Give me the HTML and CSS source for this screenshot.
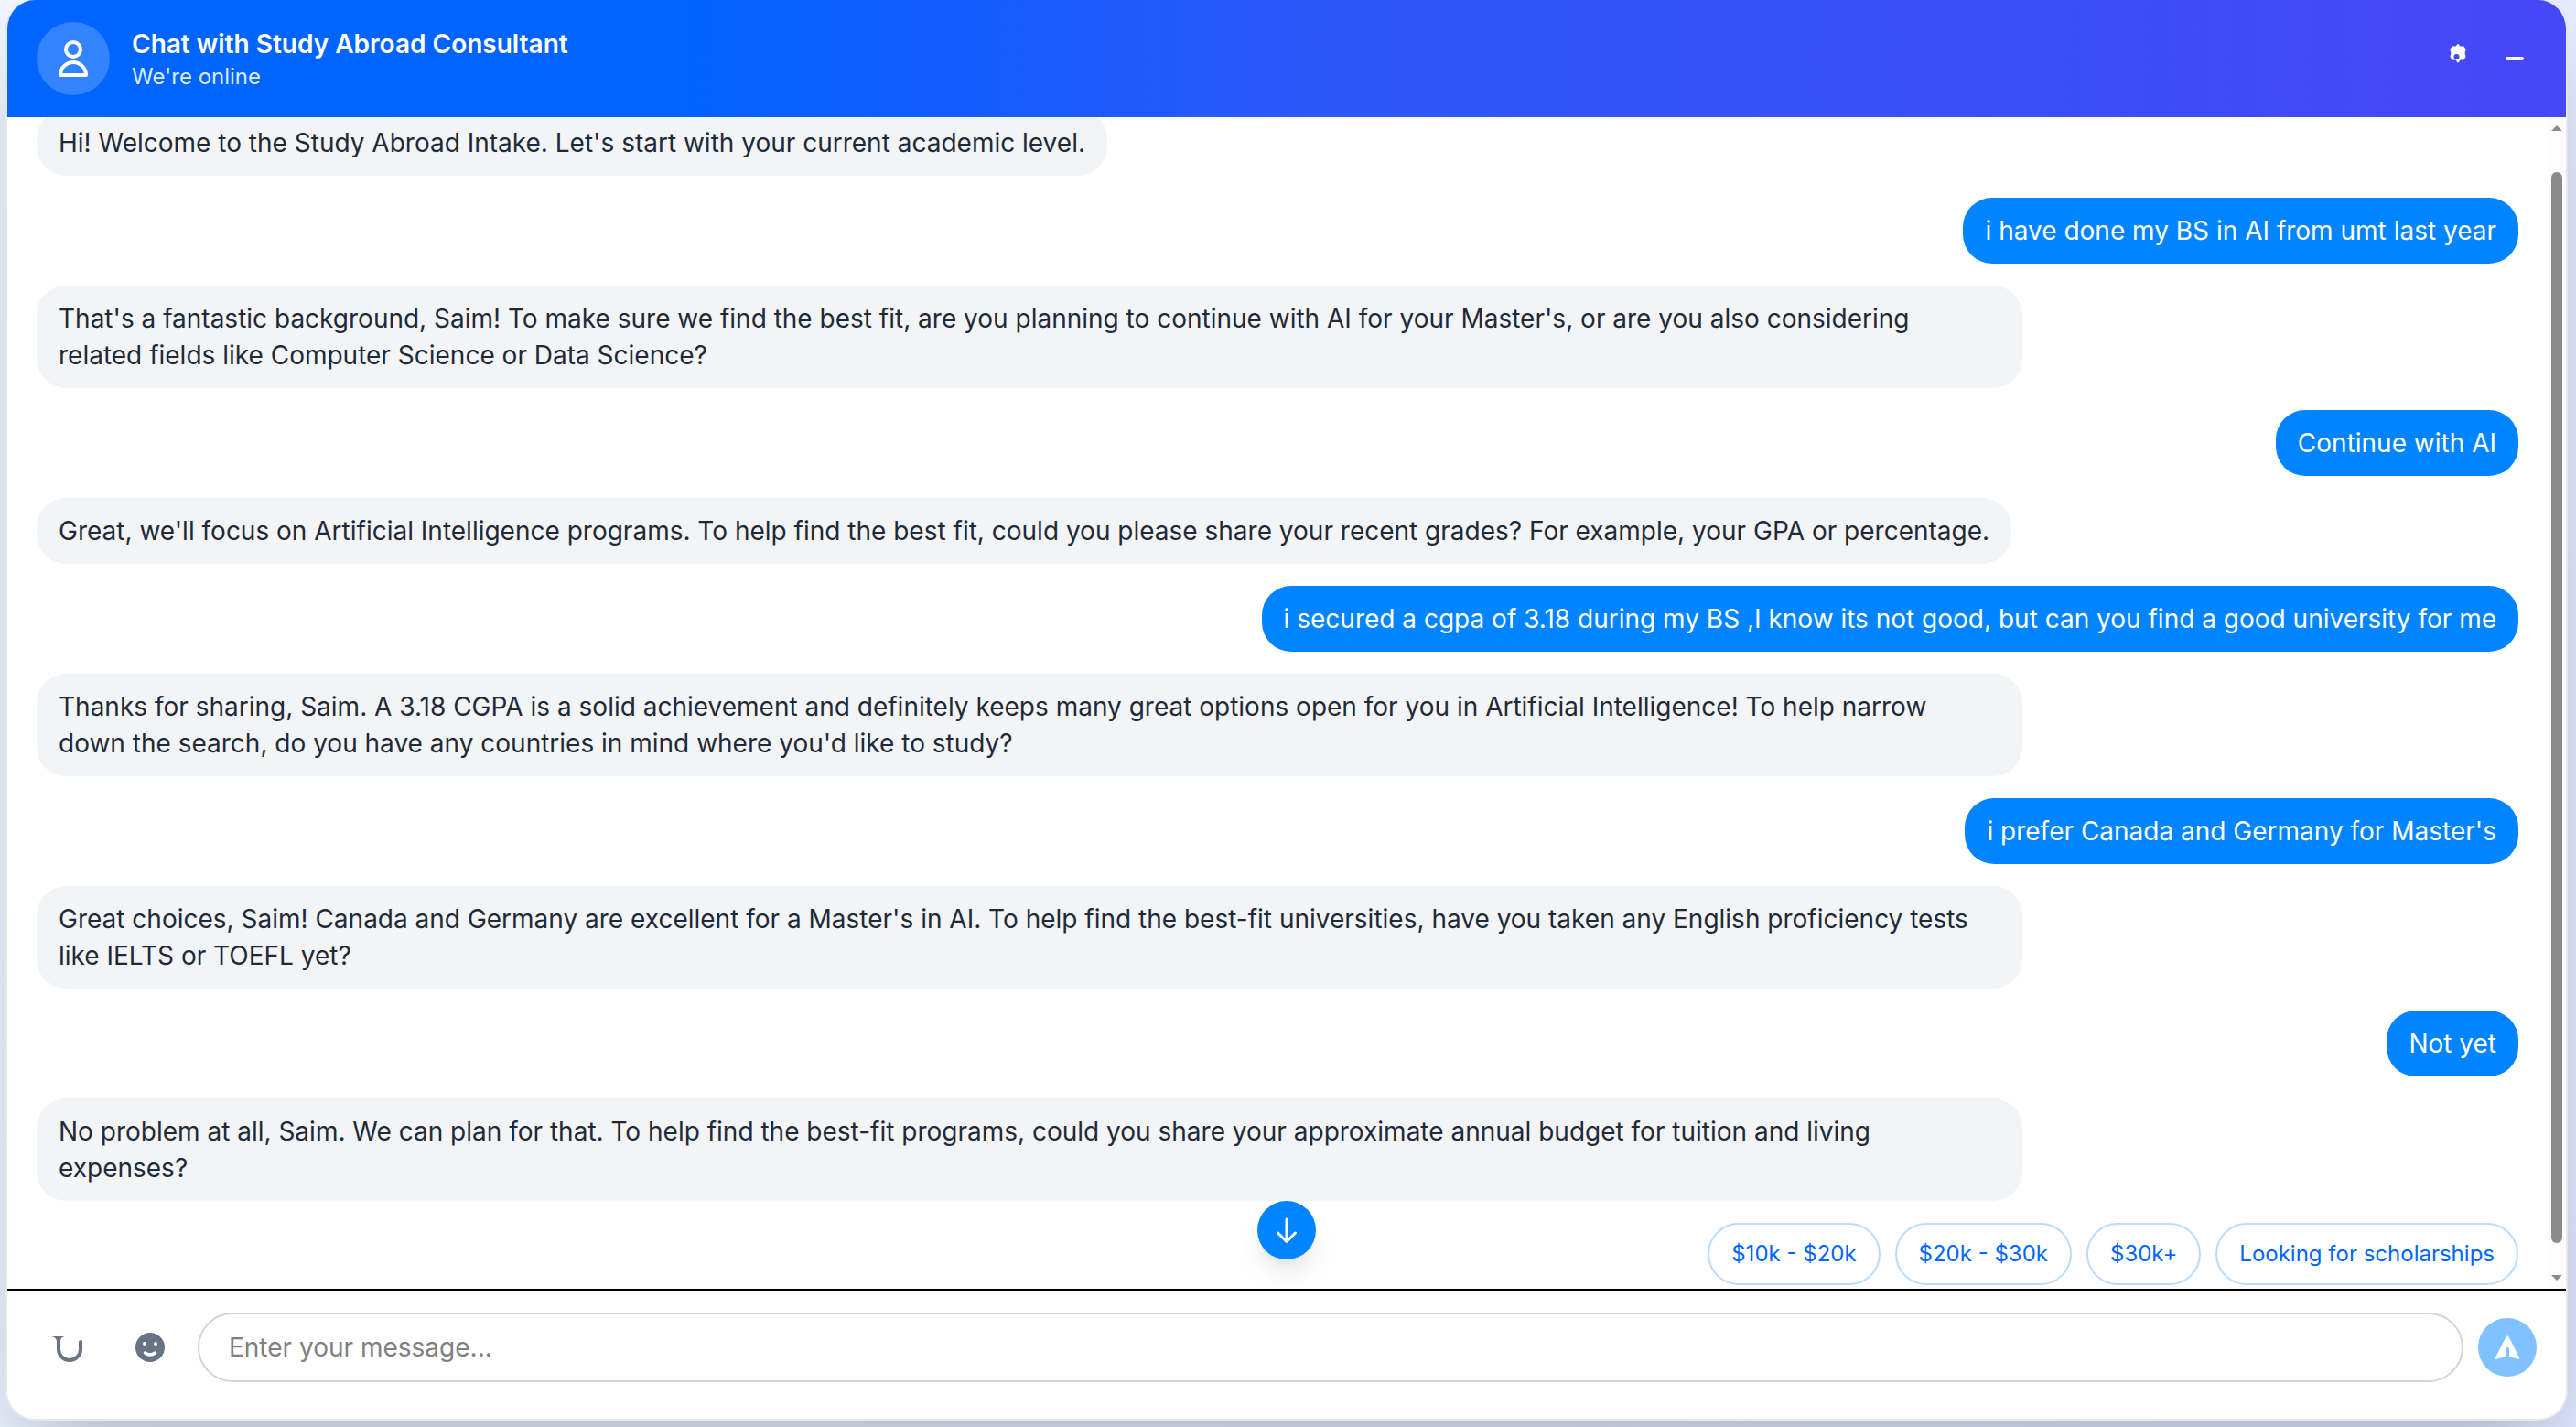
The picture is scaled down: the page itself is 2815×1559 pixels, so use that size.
FILE: index.html
```html
<!DOCTYPE html>
<html lang="en">
<head>
<meta charset="utf-8">
<meta name="viewport" content="width=device-width, initial-scale=1">
<title>Chat with Study Abroad Consultant</title>
<link rel="stylesheet" href="styles.css">
</head>
<body>
<main class="chat">
  <header class="chat-header">
    <span class="avatar">
      <svg width="48" height="48" viewBox="0 0 24 24" fill="none" stroke="currentColor" stroke-width="2" stroke-linejoin="round"><circle cx="12" cy="7" r="4"/><path d="M5 21a7 7 0 0 1 14 0z"/></svg>
    </span>
    <div class="heading">
      <h1 class="title">Chat with Study Abroad Consultant</h1>
      <p class="status">We're online</p>
    </div>
    <div class="header-actions">
      <button class="header-button" type="button" aria-label="Settings">
        <svg width="20" height="26" viewBox="0 0 20 26"><path fill="currentColor" stroke="currentColor" stroke-width="2" stroke-linejoin="round" d="M10 2l2 2.500h4l1.500 3-1 3.500 1 3.500-1.500 3h-4L10 20.500 8.500 17.500H4l-1.500-3 1-3.500-1-3.500 1.500-3h4z"/><circle cx="8.500" cy="15" r="3" fill="#4549f5"/></svg>
      </button>
      <button class="header-button" type="button" aria-label="Minimize">
        <svg width="20" height="20" viewBox="0 0 20 20" fill="none" stroke="currentColor" stroke-width="4" stroke-linecap="round"><path d="M2 14h16"/></svg>
      </button>
    </div>
  </header>

  <section class="conversation" aria-label="Conversation">
    <div class="messages">
      <p class="message">Hi! Welcome to the Study Abroad Intake. Let's start with your current academic level.</p>
      <p class="message mine">i have done my BS in AI from umt last year</p>
      <p class="message">That's a fantastic background, Saim! To make sure we find the best fit, are you planning to continue with AI for your Master's, or are you also considering related fields like Computer Science or Data Science?</p>
      <p class="message mine">Continue with AI</p>
      <p class="message">Great, we'll focus on Artificial Intelligence programs. To help find the best fit, could you please share your recent grades? For example, your GPA or percentage.</p>
      <p class="message mine">i secured a cgpa of 3.18 during my BS ,I know its not good, but can you find a good university for me</p>
      <p class="message">Thanks for sharing, Saim. A 3.18 CGPA is a solid achievement and definitely keeps many great options open for you in Artificial Intelligence! To help narrow down the search, do you have any countries in mind where you'd like to study?</p>
      <p class="message mine">i prefer Canada and Germany for Master's</p>
      <p class="message">Great choices, Saim! Canada and Germany are excellent for a Master's in AI. To help find the best-fit universities, have you taken any English proficiency tests like IELTS or TOEFL yet?</p>
      <p class="message mine">Not yet</p>
      <p class="message">No problem at all, Saim. We can plan for that. To help find the best-fit programs, could you share your approximate annual budget for tuition and living expenses?</p>
      <div class="replies">
        <button class="reply" type="button">$10k - $20k</button>
        <button class="reply" type="button">$20k - $30k</button>
        <button class="reply" type="button">$30k+</button>
        <button class="reply" type="button">Looking for scholarships</button>
      </div>
    </div>
    <div class="scrollbar" aria-hidden="true">
      <span class="arrow-up"></span>
      <span class="thumb"></span>
      <span class="arrow-down"></span>
    </div>
    <button class="jump" type="button" aria-label="Scroll to latest">
      <svg width="40" height="40" viewBox="0 0 40 40" fill="none" stroke="currentColor" stroke-width="3" stroke-linecap="round" stroke-linejoin="round"><path d="M20 8v24M10.500 23l9.500 9.500 9.500-9.500"/></svg>
    </button>
  </section>

  <form class="composer">
    <button class="tool" type="button" aria-label="Attach file">
      <svg width="40" height="40" viewBox="0 0 40 40"><path fill="currentColor" d="M0 8h15c-3 .5-4.500 2-5 5H6C5.500 10 3 8.500 0 8z"/><path d="M8 11v11a12 12 0 0 0 24 0v-8" fill="none" stroke="currentColor" stroke-width="4" stroke-linecap="round"/></svg>
    </button>
    <button class="tool" type="button" aria-label="Insert emoji">
      <svg width="32" height="32" viewBox="0 0 32 32"><circle cx="16" cy="16" r="16" fill="currentColor"/><circle cx="10" cy="12" r="2" fill="#fff"/><circle cx="22" cy="12" r="2" fill="#fff"/><path d="M10.500 22q5.500 4 11 0" fill="none" stroke="#fff" stroke-width="3.500" stroke-linecap="round"/></svg>
    </button>
    <input class="field" type="text" placeholder="Enter your message..." aria-label="Message">
    <button class="send" type="button" aria-label="Send">
      <svg width="28" height="28" viewBox="0 0 28 28"><path fill="currentColor" d="M14 1.500c.7 0 1.200.4 1.500 1L27 25c.6 1.300-.4 2-1.500 1.700L16 24V16q0-2-2-2t-2 2v8l-9.500 2.700C1.400 27 .4 26.300 1 25L12.500 2.500c.3-.6.8-1 1.500-1z"/></svg>
    </button>
  </form>
</main>
</body>
</html>
```
FILE: styles.css
```css
* { box-sizing: border-box; }

body {
  margin: 0;
  height: 100vh;
  padding: 0 9px 7px 6px;
  overflow: hidden;
  background: linear-gradient(135deg, #eff6ff, #e0e7ff);
  color: #1e2a38;
  font-family: Inter, "Liberation Sans", sans-serif;
}

h1, p { margin: 0; }
button { padding: 0; border: 0; background: none; color: inherit; font: inherit; cursor: pointer; }
svg { display: block; }

.chat {
  display: flex;
  flex-direction: column;
  height: 100%;
  overflow: hidden;
  border: 2px solid #e5e7eb;
  border-top: 0;
  border-radius: 32px;
  background: #fff;
  box-shadow: 0 50px 100px -24px rgba(0, 0, 0, 0.25);
}

.chat-header {
  display: flex;
  align-items: center;
  gap: 24px;
  padding: 24px 32px;
  background: linear-gradient(90deg, #0066ff, #0062ff 26%, #2b57f9 50%, #4747f5);
  color: #fff;
}

.avatar {
  display: grid;
  place-items: center;
  width: 80px;
  height: 80px;
  border-radius: 50%;
  background: rgba(255, 255, 255, 0.2);
}

.heading { flex: 1; }
.title { font-size: 28px; font-weight: 600; line-height: 40px; }
.status { font-size: 24px; line-height: 32px; color: #dbeafe; }

.header-actions { display: flex; align-self: flex-start; gap: 14px; }
.header-button { display: grid; place-items: center; width: 48px; height: 72px; }

.conversation {
  position: relative;
  display: flex;
  flex: 1;
  min-height: 0;
}

.messages {
  display: flex;
  flex: 1;
  flex-direction: column;
  justify-content: flex-end;
  align-items: flex-start;
  gap: 24px;
  padding: 0 32px 4px;
  overflow: hidden;
}

.message {
  max-width: 80%;
  padding: 16px 24px;
  border-radius: 32px;
  background: #f3f4f6;
  font-size: 28px;
  line-height: 40px;
}

.mine { align-self: flex-end; background: #0084ff; color: #fff; }

.replies { display: flex; align-self: flex-end; gap: 16px; }

.reply {
  padding: 16px 24px;
  border: 2px solid #badbff;
  border-radius: 34px;
  background: #fff;
  color: #0066ff;
  font-size: 24px;
  line-height: 32px;
}

.scrollbar {
  display: flex;
  flex-direction: column;
  align-items: center;
  width: 20px;
  padding: 9px 0;
  background: #fcfcfc;
}

.arrow-up, .arrow-down { border: 6px solid transparent; }
.arrow-up { border-top: 0; border-bottom-color: #8b8b8b; }
.arrow-down { border-bottom: 0; border-top-color: #8b8b8b; }
.thumb { flex: 1; width: 12px; margin: 45px 0 35px; border-radius: 6px; background: #8b8b8b; }

.jump {
  position: absolute;
  bottom: 32px;
  left: 50%;
  display: grid;
  place-items: center;
  width: 64px;
  height: 64px;
  margin-left: -32px;
  border-radius: 50%;
  background: #0084ff;
  color: #fff;
  box-shadow: 0 20px 30px -6px rgba(0, 0, 0, 0.1), 0 8px 12px -8px rgba(0, 0, 0, 0.1);
}

.composer {
  display: flex;
  align-items: center;
  gap: 16px;
  padding: 24px 32px 40px;
  border-top: 2px solid #000;
}

.tool { display: grid; place-items: center; width: 72px; height: 72px; color: #687385; }

.field {
  flex: 1;
  min-width: 0;
  height: 76px;
  padding: 0 32px;
  border: 2px solid #d0d5dc;
  border-radius: 38px;
  background: #fff;
  color: inherit;
  font: inherit;
  font-size: 28px;
}

.field::placeholder { color: #808080; }

.send {
  display: grid;
  place-items: center;
  width: 64px;
  height: 64px;
  border-radius: 50%;
  background: #80c1ff;
  color: #fff;
}
```
